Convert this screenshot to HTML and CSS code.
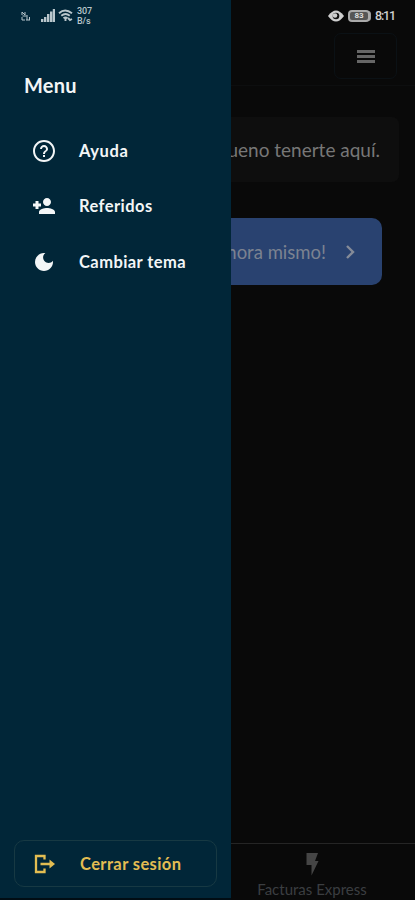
FILE: index.html
```html
<!DOCTYPE html>
<html lang="es">
<head>
<meta charset="utf-8">
<title>Menu</title>
<link rel="stylesheet" href="styles.css">
</head>
<body>
<div class="screen">
  <aside class="drawer">
    <div class="status">
      <svg class="sim" width="10" height="10" viewBox="0 0 10 10" fill="none" stroke="currentColor"><path d="M1 1v3M1 1l3 3V1M1 6v3h3M6 4v5M8.500 6v3M5 9h4M1.500 5h4"/></svg>
      <svg class="signal" width="14" height="13" viewBox="0 0 14 13" fill="currentColor"><path d="M0 10h2.400v3H0zM3 8h2.400v5H3zM6 5h2.400v8H6zM9 2.500h2.400V13H9zM11.800 0H14v13h-2.200z"/></svg>
      <svg class="wifi" width="16" height="13" viewBox="0 0 16 13" fill="none" stroke="currentColor" stroke-width="1.900"><path d="M1 4.200q6-5.500 13 0M3.300 6.700q4.200-3.500 8.500 0M5.500 9.200q2-1.500 4 0"/><path d="M7.500 9v3M10 9l2 2 2-1" /></svg>
      <div class="speed"><span>307</span><span>B/s</span></div>
    </div>
    <h1>Menu</h1>
    <nav>
      <a class="item"><svg width="24" height="24" viewBox="0 0 24 24" fill="currentColor"><path d="M11 18h2v-2h-2v2zm1-17C5.900 1 1 5.900 1 12s4.900 11 11 11 11-4.900 11-11S18.100 1 12 1zm0 20c-5 0-9-4-9-9s4-9 9-9 9 4 9 9-4 9-9 9zm0-15c-2.210 0-4 1.790-4 4h2c0-1.100.9-2 2-2s2 .9 2 2c0 2-3 1.750-3 5h2c0-2.250 3-2.500 3-5 0-2.210-1.790-4-4-4z"/></svg><span class="ayuda">Ayuda</span></a>
      <a class="item"><svg width="24" height="24" viewBox="0 0 24 24" fill="currentColor"><path d="M15 12c2.210 0 4-1.790 4-4s-1.790-4-4-4-4 1.790-4 4 1.790 4 4 4zm-8.500-2.500V7h-3v2.500H1v3h2.500V15h3v-2.500H9v-3zM15 14c-2.670 0-8 1.340-8 4v2h16v-2c0-2.660-5.330-4-8-4z"/></svg><span class="referidos">Referidos</span></a>
      <a class="item"><svg width="24" height="24" viewBox="0 0 24 24" fill="currentColor"><path d="M12 3c-4.970 0-9 4.030-9 9s4.030 9 9 9 9-4.030 9-9c0-.46-.04-.92-.1-1.360-.98 1.370-2.580 2.260-4.400 2.260-2.980 0-5.400-2.420-5.400-5.400 0-1.810.89-3.420 2.260-4.400C12.920 3.040 12.460 3 12 3z"/></svg><span class="tema">Cambiar tema</span></a>
    </nav>
    <button class="logout"><svg width="24" height="24" viewBox="0 0 24 24" fill="none" stroke="currentColor" stroke-width="2.300"><path d="M12.500 7.500V4H4v16h8.500v-3.500M8.500 12H20"/><path d="M17.500 7.500L23 12l-5.500 4.500z" fill="currentColor" stroke="none"/></svg><span>Cerrar sesión</span></button>
  </aside>
  <main class="page">
    <div class="status right">
      <svg width="16" height="12" viewBox="0 0 16 12"><path d="M0 6q8-11 16 0-8 11-16 0z" fill="currentColor"/><circle cx="8" cy="6" r="3.300" fill="#111"/><circle cx="7" cy="5.500" r="2.300" fill="currentColor"/></svg>
      <div class="battery"><span>83</span></div>
      <span class="clock">8:11</span>
    </div>
    <div class="toolbar"><div class="burger"><i></i><i></i><i></i></div></div>
    <div class="welcome"><span>ueno tenerte aquí.</span></div>
    <div class="cta"><span>hora mismo!</span><svg width="12" height="16" viewBox="0 0 12 16" fill="none" stroke="currentColor" stroke-width="2.400"><path d="M2 2l6 6-6 6"/></svg></div>
    <footer><svg width="24" height="26" viewBox="0 0 24 26" fill="currentColor"><path d="M6.500 2H18l-3 8h3.500L11.500 24.500V14h-5z"/></svg><span>Facturas Express</span></footer>
  </main>
</div>
</body>
</html>
```

FILE: styles.css
```css
* { box-sizing: border-box; }
svg { flex: none; }
body { margin: 0; background: #090909; font-family: Lato, "Liberation Sans", sans-serif; }
.screen { display: grid; grid-template-columns: 231px 184px; height: 900px; overflow: hidden; }
.drawer { background: #012638; color: #f3f6f7; display: flex; flex-direction: column; border-bottom: 2px solid #010d14; }
.status { height: 31px; display: flex; align-items: center; padding-left: 21px; color: #b9c6cc; }
.signal { margin-left: 10px; }
.wifi { margin-left: 3px; }
.speed { display: flex; flex-direction: column; margin-left: 3px; font: 500 9px/10px Roboto, sans-serif; letter-spacing: -.1px; }
h1 { margin: 40px 0 0 24px; font-size: 20px; line-height: 28px; font-weight: 700; letter-spacing: .2px; }
nav { margin-top: 24px; }
.item { height: 55.500px; padding-left: 32px; display: flex; align-items: center; font-size: 16.500px; font-weight: 700; }
.item span { margin-left: 23px; letter-spacing: .43px; }
.item .ayuda { letter-spacing: .6px; }
.logout { margin: auto 14px 11px 14px; height: 47px; border: 1px solid #173943; border-radius: 10px; background: transparent; color: #e3bd52; display: flex; align-items: center; padding: 0 0 0 17px; font: 700 16.500px Lato, sans-serif; }
.logout span { margin-left: 24px; letter-spacing: .4px; }
.page { overflow: hidden; display: flex; flex-direction: column; color: #777; }
.right { padding-left: 97px; color: #d0d0d0; }
.battery { width: 22px; height: 12px; margin-left: 4px; border: 2px solid #aaa; border-radius: 4px; background: #555; display: flex; align-items: center; justify-content: center; font: 700 8px Roboto, sans-serif; color: #ddd; box-shadow: 2px 0 0 -1px #999; }
.clock { margin-left: 5px; font: 500 12.500px Roboto, sans-serif; letter-spacing: -1.2px; }
.toolbar { height: 55px; border-bottom: 1px solid #0d0e0f; padding: 2px 0 0 103px; }
.burger { width: 63px; height: 46px; border: 1px solid #0b1115; border-radius: 7px; display: flex; flex-direction: column; align-items: center; justify-content: center; gap: 2px; }
.burger i { width: 18px; height: 3px; background: #666; }
.welcome { margin: 31px 16px 0 0; height: 65px; border-radius: 0 7px 7px 0; background: #0e0e0e; display: flex; align-items: center; justify-content: flex-end; padding-right: 19px; white-space: nowrap; font-size: 19px; overflow: hidden; }
.cta { margin: 36px 33px 0 0; height: 67px; border-radius: 0 10px 10px 0; background: #294270; color: #7c8290; display: flex; align-items: center; justify-content: flex-end; padding-right: 25px; white-space: nowrap; font-size: 18.500px; overflow: hidden; }
.cta svg { margin-left: 19px; color: #858b98; }
footer { margin-top: auto; height: 57px; border-top: 1px solid #252525; color: #454545; display: flex; flex-direction: column; align-items: center; padding: 7px 22px 0 0; font-size: 15px; line-height: 19px; white-space: nowrap; }
footer span { margin-top: 3px; color: #3b3e41; }
```
